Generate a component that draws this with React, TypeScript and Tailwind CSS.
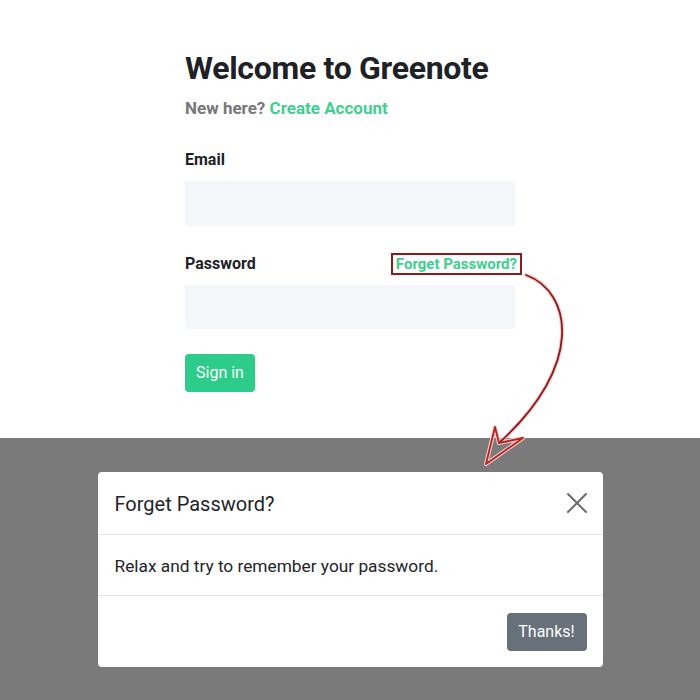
import React from "react";

export default function App() {
  const font = { fontFamily: "Roboto, 'Noto Sans', sans-serif" };
  return (
    <div className="relative w-[700px] h-[700px] overflow-hidden bg-white" style={font}>
      <div className="h-[438px] bg-white pt-[48px]">
        <div className="mx-auto w-[330px] flex flex-col">
          <h1 className="text-[32px] leading-[40px] font-bold text-[#1e2226] tracking-[-0.3px]">Welcome to Greenote</h1>
          <p className="mt-[9px] text-[17px] leading-[22px] font-bold text-[#777777]">
            New here? <span className="text-[#3fcf8e]">Create Account</span>
          </p>
          <label className="mt-[30px] text-[16px] leading-[22px] font-bold text-[#1e2226]">Email</label>
          <div className="mt-[10px] h-[45px] rounded-[3px] bg-[#f3f7f9]" />
          <div className="mt-[27px] flex items-center justify-between">
            <span className="text-[16px] leading-[22px] font-bold text-[#1e2226]">Password</span>
            <span className="-mr-[7px] border-2 border-[#8e1b1b] px-[3px] text-[15px] leading-[18px] font-bold text-[#3fcf8e]">Forget Password?</span>
          </div>
          <div className="mt-[10px] h-[44px] rounded-[3px] bg-[#f3f7f9]" />
          <button className="mt-[25px] h-[38px] w-[70px] rounded-[4px] bg-[#2ecc8b] text-[16px] text-white">Sign in</button>
        </div>
      </div>
      <div className="h-[262px] bg-[#7a7a7a] pt-[34px]">
        <div className="mx-auto w-[505px] rounded-[4px] bg-white">
          <div className="flex h-[63px] items-center justify-between border-b border-[#e3e6e8] pl-[17px] pr-[15px]">
            <span className="pt-[2px] text-[20px] text-[#222529]">Forget Password?</span>
            <svg width="22" height="22" viewBox="0 0 22 22">
              <path d="M2 2 L20 20 M20 2 L2 20" stroke="#6b6b6b" strokeWidth="2" strokeLinecap="round" />
            </svg>
          </div>
          <div className="flex h-[61px] items-center border-b border-[#e3e6e8] pl-[17px]">
            <span className="pt-[3px] text-[17.3px] text-[#222529]">Relax and try to remember your password.</span>
          </div>
          <div className="flex h-[71px] items-center justify-end pr-[16px]">
            <button className="h-[38px] w-[80px] rounded-[4px] bg-[#68707a] text-[16px] text-white">Thanks!</button>
          </div>
        </div>
      </div>
      <svg className="pointer-events-none absolute left-0 top-0" width="700" height="700" viewBox="0 0 700 700">
        <g fill="none" strokeLinejoin="round" strokeLinecap="round">
          <path d="M526 275 C572 292, 585 365, 499 443" stroke="#f4cccc" strokeWidth="4" />
          <path d="M486 464 L495 427 L499 443 L523 438 Z" stroke="#f4cccc" strokeWidth="4" />
          <path d="M526 275 C572 292, 585 365, 499 443" stroke="#8a1c1c" strokeWidth="1.8" />
          <path d="M486 464 L495 427 L499 443 L523 438 Z" stroke="#b52222" strokeWidth="1.8" />
        </g>
      </svg>
    </div>
  );
}
